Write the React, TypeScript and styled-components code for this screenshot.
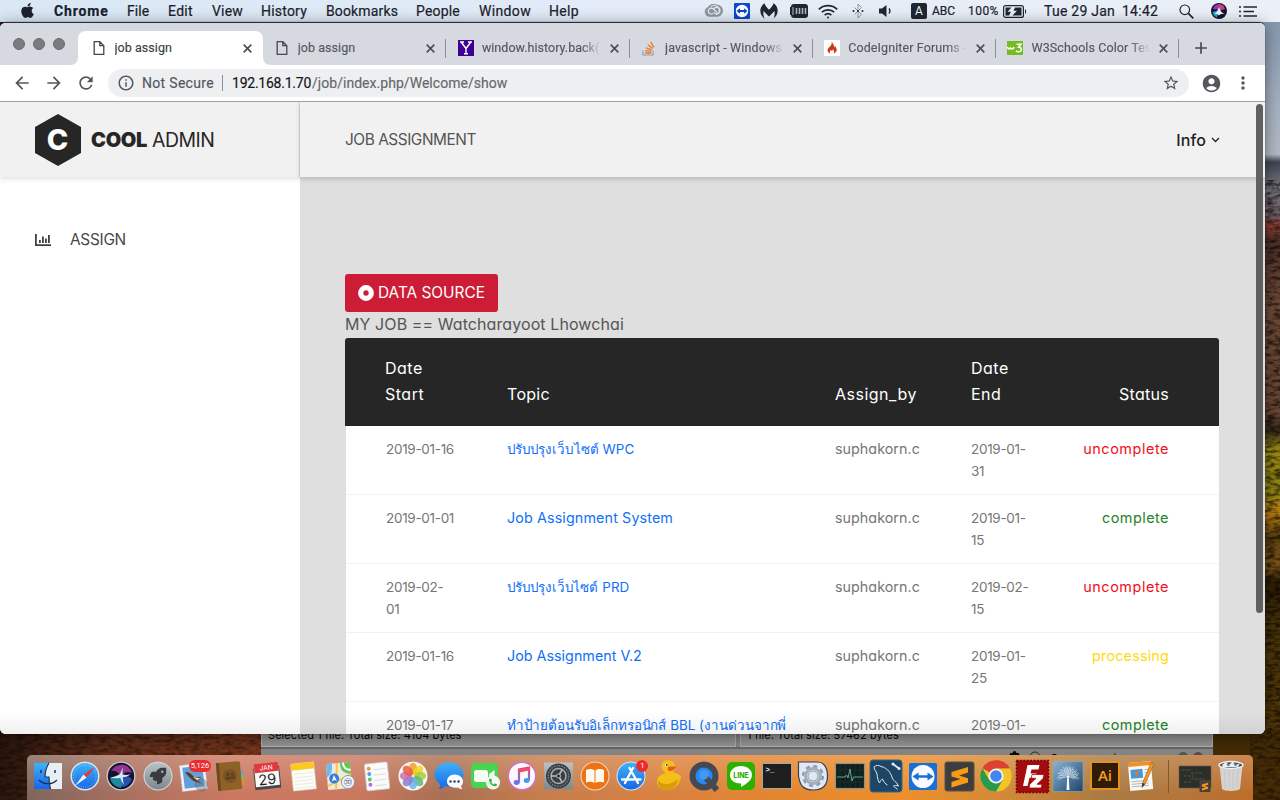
import React from "react";
import styled, { createGlobalStyle } from "styled-components";
import { FaApple, FaRocket, FaCog, FaPhoneAlt, FaUserFriends } from "react-icons/fa";
import {
  MdArrowBack, MdArrowForward, MdRefresh, MdStarBorder, MdAccountCircle, MdMoreVert,
  MdInfoOutline, MdAdd,
} from "react-icons/md";

const GlobalStyle = createGlobalStyle`
  * { box-sizing: border-box; }
  body { margin: 0; background: #2a1a10; }
  svg { display: block; flex: none; }
`;

const uiFont = `Roboto, "Liberation Sans", sans-serif`;
const pageFont = `Inter, "Noto Sans", sans-serif`;

/* ---------- desktop ---------- */

const Desktop = styled.div`
  position: relative;
  width: 1280px;
  height: 800px;
  overflow: hidden;
  font-family: ${uiFont};
`;

const Wallpaper = styled.svg`
  position: absolute;
  inset: 0;
`;

/* ---------- menu bar ---------- */

const MenuBar = styled.header`
  position: relative;
  display: flex;
  align-items: center;
  height: 22px;
  padding-left: 19px;
  background: linear-gradient(90deg, #d9e7f5, #e2ebf7 45%, #ebf0f7);
  color: #1b222c;
  font-size: 14px;
  line-height: 22px;
  -webkit-text-stroke: 0.2px #1b222c;
`;

const AppleMark = styled.span`
  width: 35px;
  margin-top: -1px;
`;

const MenuItem = styled.span<{ $w: number; $ls: number; $bold?: boolean }>`
  width: ${(p) => p.$w}px;
  letter-spacing: ${(p) => p.$ls}px;
  font-weight: ${(p) => (p.$bold ? 700 : 400)};
  white-space: nowrap;
`;

const StatusItem = styled.span<{ $w: number; $size?: number; $ls?: number }>`
  display: flex;
  align-items: center;
  width: ${(p) => p.$w}px;
  height: 22px;
  font-size: ${(p) => p.$size ?? 14}px;
  letter-spacing: ${(p) => p.$ls ?? 0}px;
  white-space: pre;
`;

/* ---------- browser window ---------- */

const BrowserWindow = styled.section`
  position: absolute;
  left: 0;
  top: 22px;
  display: flex;
  flex-direction: column;
  width: 1265px;
  height: 712px;
  border-top: 1px solid #252c38;
  border-radius: 6px;
  overflow: hidden;
  background: #fff;
`;

const WindowShadow = styled.div`
  position: absolute;
  left: 0;
  top: 22px;
  width: 1265px;
  height: 712px;
  border-radius: 6px;
  box-shadow: 0 3px 16px rgba(0, 0, 0, 0.45), 0 0 1px rgba(0, 0, 0, 0.8);
`;

const TabStrip = styled.div`
  display: flex;
  flex: none;
  height: 42px;
  background: #d6d9e0;
`;

const Lights = styled.div`
  display: flex;
  gap: 8px;
  width: 80px;
  padding: 15px 0 0 13px;
`;

const Light = styled.i`
  width: 12px;
  height: 12px;
  border: 1px solid #6b6b6f;
  border-radius: 50%;
  background: #7b7a7f;
`;

const Tab = styled.div<{ $active?: boolean }>`
  position: relative;
  display: flex;
  align-items: center;
  width: 183.2px;
  height: 34px;
  margin-top: 8px;
  color: ${(p) => (p.$active ? "#3c4043" : "#54585d")};
  font-size: 12.5px;
`;

const ActiveShape = styled.svg`
  position: absolute;
  left: -10px;
  top: 0;
`;

const TabIcon = styled.span<{ $shift?: boolean }>`
  position: relative;
  display: flex;
  justify-content: center;
  width: 16px;
  margin: 0 8px 0 ${(p) => (p.$shift ? 11.5 : 10.5)}px;
`;

const TabTitle = styled.span<{ $ls: number; $fade?: boolean }>`
  position: relative;
  width: 119px;
  overflow: hidden;
  line-height: 20px;
  letter-spacing: ${(p) => p.$ls}px;
  white-space: nowrap;
  -webkit-text-stroke: 0.15px currentColor;
  mask-image: ${(p) => (p.$fade ? "linear-gradient(90deg, #000 84%, transparent)" : "none")};
`;

const TabClose = styled.svg`
  position: relative;
  margin-left: 9px;
`;

const TabDivider = styled.i`
  width: 1px;
  height: 19px;
  margin-left: auto;
  background: #8c9096;
`;

const NewTab = styled.div`
  display: flex;
  align-items: center;
  height: 34px;
  margin: 8px 0 0 12px;
  color: #44484d;
`;

const Toolbar = styled.div`
  display: flex;
  flex: none;
  align-items: center;
  height: 37px;
  padding-left: 12px;
  border-bottom: 1px solid #a3a5a6;
  background: #fff;
  color: #54585d;
`;

const NavButton = styled.span`
  width: 32px;
`;

const ProfileButton = styled.span`
  width: 32px;
  margin-left: 12px;
`;

const Omnibox = styled.div`
  display: flex;
  align-items: center;
  width: 1081px;
  height: 28px;
  padding: 0 9px;
  border-radius: 14px;
  background: #eeeff1;
  font-size: 14px;
  -webkit-text-stroke: 0.15px currentColor;
`;

const Secure = styled.span`
  width: 80px;
  margin-left: 7px;
  letter-spacing: 0.31px;
  color: #54585d;
`;

const UrlDivider = styled.i`
  width: 1px;
  height: 16px;
  margin-right: 9px;
  background: #8c9096;
`;

const Host = styled.span`
  width: 80px;
  letter-spacing: -0.24px;
  color: #111315;
`;

const Path = styled.span`
  flex: 1;
  letter-spacing: 0.04px;
  color: #64686d;
`;

/* ---------- admin page ---------- */

const Page = styled.main`
  position: relative;
  display: flex;
  flex: 1;
  min-height: 0;
  background: #dfdfdf;
  color: #555;
  font-family: ${pageFont};
  font-size: 16px;
  font-feature-settings: "cv11";
`;

const Sidebar = styled.aside`
  width: 300px;
  background: #fff;
`;

const Brand = styled.div`
  display: flex;
  align-items: center;
  height: 75px;
  padding-left: 35px;
  border-right: 1px solid #d8d8d8;
  background: #f1f1f1;
  box-shadow: 0 2px 5px rgba(0, 0, 0, 0.12);
  color: #262626;
  font-size: 20px;
`;

const BrandStrong = styled.b`
  width: 61px;
  margin-left: 10px;
  font-weight: 900;
  letter-spacing: -0.32px;
`;

const BrandLight = styled.span`
  font-size: 19.4px;
  letter-spacing: -0.45px;
`;

const SideLink = styled.a`
  display: flex;
  align-items: center;
  gap: 19px;
  margin-top: 50px;
  padding-left: 35px;
  font-size: 15.4px;
  line-height: 25px;
  letter-spacing: -0.28px;
  color: #484848;
`;

const Content = styled.div`
  display: flex;
  flex: 1;
  flex-direction: column;
  min-width: 0;
`;

const TopBar = styled.div`
  display: flex;
  flex: none;
  align-items: center;
  justify-content: space-between;
  height: 75px;
  padding: 0 45px;
  background: #f1f1f1;
  box-shadow: 0 2px 5px rgba(0, 0, 0, 0.18);
`;

const PageTitle = styled.span`
  padding-bottom: 1px;
  font-size: 15.4px;
  letter-spacing: -0.45px;
`;

const InfoMenu = styled.span`
  display: flex;
  align-items: center;
  gap: 5px;
  font-weight: 500;
  letter-spacing: 0.1px;
  color: #222;
`;

const Body = styled.div`
  display: flex;
  flex: 1;
  flex-direction: column;
  align-items: flex-start;
  min-height: 0;
  padding: 97px 46px 0 45px;
  overflow: hidden;
`;

const SourceButton = styled.button`
  display: flex;
  flex: none;
  align-items: center;
  gap: 4px;
  width: 153px;
  height: 38px;
  padding: 0 0 1px 13px;
  border: 0;
  border-radius: 3px;
  background: #cc1c36;
  color: #fff;
  font: 400 15.4px ${pageFont};
  letter-spacing: 0;
`;

const Owner = styled.div`
  flex: none;
  height: 26px;
  line-height: 24px;
  letter-spacing: 0.09px;
`;

const columns = "122px 328px 136px 80px 118px";

const Table = styled.div`
  flex: none;
  width: 874px;
`;

const HeadRow = styled.div`
  display: grid;
  grid-template-columns: ${columns};
  align-items: end;
  height: 88px;
  padding: 0 0 19px 40px;
  border-radius: 3px 3px 0 0;
  background: #262626;
  color: #fff;
  line-height: 26px;
`;

const HeadCell = styled.span<{ $ls: number; $right?: boolean }>`
  letter-spacing: ${(p) => p.$ls}px;
  text-align: ${(p) => (p.$right ? "right" : "left")};
`;

const BodyRow = styled.div`
  display: grid;
  grid-template-columns: ${columns};
  height: 69px;
  margin-left: 1px;
  padding: 12px 0 0 39px;
  border-bottom: 1px solid #f2f2f2;
  background: #fff;
  color: #767676;
  font-size: 14px;
  line-height: 22px;
`;

const DateCell = styled.span<{ $indent?: boolean }>`
  padding-left: ${(p) => (p.$indent ? 1 : 0)}px;
  font-size: 13.5px;
  letter-spacing: -0.3px;
`;

const TopicCell = styled.a<{ $thai?: boolean; $ls: number }>`
  font-size: ${(p) => (p.$thai ? 13.4 : 14.3)}px;
  letter-spacing: ${(p) => p.$ls}px;
  white-space: nowrap;
  color: #1070f8;
`;

const ByCell = styled.span`
  font-size: 14.3px;
  letter-spacing: 0.04px;
`;

const statusTone = {
  uncomplete: { color: "#f01020", size: 14.4, ls: 0.57 },
  complete: { color: "#23821f", size: 14.4, ls: 0.48 },
  processing: { color: "#ffd90f", size: 14.4, ls: 0.17 },
};
type Status = keyof typeof statusTone;

const StatusCell = styled.span<{ $status: Status }>`
  color: ${(p) => statusTone[p.$status].color};
  font-size: ${(p) => statusTone[p.$status].size}px;
  letter-spacing: ${(p) => statusTone[p.$status].ls}px;
  text-align: right;
`;

const ScrollThumb = styled.i`
  position: absolute;
  right: 2px;
  top: 2px;
  width: 7px;
  height: 509px;
  border-radius: 4px;
  background: #606060;
`;

const BottomShade = styled.i`
  position: absolute;
  left: 0;
  right: 0;
  bottom: 0;
  height: 22px;
  background: linear-gradient(rgba(0, 0, 0, 0), rgba(0, 0, 0, 0.06));
`;

/* ---------- window behind the browser ---------- */

const BackWindow = styled.section`
  position: absolute;
  left: 261px;
  top: 722px;
  display: flex;
  flex-direction: column;
  width: 952px;
  height: 60px;
  background: #858585;
  color: #050505;
  font-family: ${pageFont};
  font-size: 11px;
`;

const Panes = styled.div`
  display: flex;
  gap: 4px;
  height: 27px;
  border-bottom: 2px solid #666;
`;

const Pane = styled.div<{ $w: number }>`
  width: ${(p) => p.$w}px;
  padding-left: 6px;
  border: 1px solid #b0b0b0;
  background: #949494;
  line-height: 24px;
  letter-spacing: 0.07px;
`;

const QueueBar = styled.div`
  display: flex;
  align-items: flex-start;
  gap: 9px;
  padding: 2px 0 0 748px;
  line-height: 14px;
`;

const Queue = styled.span`
  width: 118px;
`;

/* ---------- dock ---------- */

const DockBar = styled.nav`
  position: absolute;
  left: 27px;
  top: 755px;
  display: flex;
  width: 1226px;
  height: 46px;
  padding-left: 3px;
  border-radius: 5px 5px 0 0;
  background:
    linear-gradient(rgba(255, 235, 225, 0.22), rgba(255, 230, 210, 0) 85%),
    linear-gradient(90deg, #7e655c, #a8705f 8%, #cc7861 17%, #c9775f 27%, #a87052 34%, #c67d4e 42%, #d9813f 52%, #e4862f 62%, #ec8f2b 72%, #d08838 80%, #a97a43 88%, #b3763a 94%, #bd6d29);
`;

const Slot = styled.span<{ $w?: number }>`
  position: relative;
  display: flex;
  flex: none;
  justify-content: center;
  width: ${(p) => p.$w ?? 36.45}px;
  padding-top: 3px;
`;

const Badge = styled.span<{ $wide?: boolean }>`
  position: absolute;
  top: 5px;
  right: 1px;
  height: 12px;
  min-width: 12px;
  padding: 0 ${(p) => (p.$wide ? 2 : 0)}px;
  border-radius: 6px;
  background: #ec2b2f;
  color: #fff;
  font: 7.5px/12px ${uiFont};
  text-align: center;
`;

const DockRule = styled.i`
  width: 1px;
  height: 33px;
  margin-top: 2px;
  background: #7e5a30;
`;

const I = ({ children }: { children: React.ReactNode }) => (
  <svg width="36" height="36" viewBox="0 0 36 36">{children}</svg>
);

const Glyph = ({ x, y, size, color, icon: Icon }: { x: number; y: number; size: number; color: string; icon: any }) => (
  <Icon x={x} y={y} size={size} color={color} />
);

const dockIcons: { icon: React.ReactNode; badge?: string }[] = [
  { icon: (
    <I>
      <rect x="4" y="5" width="28" height="26" fill="#e9eef5" />
      <path d="M4 5h15c-3 5-4 9-4 14h4c0 4 .5 8 1.500 12H4z" fill="url(#blueDown)" />
      <path d="M11 12v3M25 12v3" stroke="#16304f" strokeWidth="1.500" />
      <path d="M9 22c5 5 13 5 18 0M19 5c-3 5-4 9-4 14h4c0 4 .5 8 1.500 12" fill="none" stroke="#16304f" strokeWidth="1.100" />
    </I>
  ) },
  { icon: (
    <I>
      <circle cx="18" cy="18" r="14.500" fill="#dfe5ea" /><circle cx="18" cy="18" r="13" fill="url(#blueDown)" />
      <circle cx="18" cy="18" r="11" fill="none" stroke="#bfe0fa" strokeWidth="1" strokeDasharray=".6 1.700" />
      <path d="M28 9L16.500 16.500l3 3z" fill="#f0352c" /><path d="M8 28l8.500-11.500 3 3z" fill="#f4f4f4" />
    </I>
  ) },
  { icon: (
    <I>
      <circle cx="18" cy="18" r="14.500" fill="#c9ccd4" /><circle cx="18" cy="18" r="13.200" fill="#15132f" />
      <path d="M8 13c3-5 8-7 13-6 4 1 7 4 8 8-4-2-8-1-11 3-3-4-6-6-10-5z" fill="#b03fa8" opacity=".8" />
      <path d="M7 20c4-1 8-1 11-2 2 4 2 8 0 12-5-1-10-4-11-10z" fill="#1fa7b8" opacity=".8" />
      <path d="M18 18c4-1 8 0 11 3-2 5-6 8-10 8 0-4 0-8-1-11z" fill="#2c62c9" opacity=".8" />
      <path d="M7 19.500c4-.5 7-1.500 10-3.500 1-2.500 2-5 3-6.500-.5 2.700-.6 5-.3 7 3 .8 5.500.6 8-.5-2.700 2.300-5 3-8 3.200.3 2.800.7 5 1.300 7.800-2-2.700-3-5-3.600-7.300-3.400.9-7 .8-10.400-.2z" fill="#e8fbff" opacity=".9" />
    </I>
  ) },
  { icon: (
    <I>
      <circle cx="18" cy="18" r="14.500" fill="#d5dadd" /><circle cx="18" cy="18" r="13.500" fill="url(#steel)" />
      <Glyph icon={FaRocket} x={9.5} y={9.5} size={17} color="#373b40" />
    </I>
  ) },
  { badge: "5,126", icon: (
    <I>
      <g transform="rotate(-7 18 19)">
        <rect x="5" y="6" width="25" height="26" fill="#f4f4f4" stroke="#cfcfcf" strokeDasharray="1.500 1.200" />
        <rect x="7.500" y="8.500" width="20" height="21" fill="#5f9fdc" />
        <path d="M10 13c4 0 6 3 8 6l7 1-3 3 3 4-8-4c-2-3-5-5-7-10z" fill="#5a3b1d" />
        <path d="M17 19l7 2-3 2z" fill="#e9dcc0" />
      </g>
      <circle cx="25.500" cy="27" r="6" fill="#65717e" opacity=".4" stroke="#3f4852" strokeWidth=".8" />
    </I>
  ) },
  { icon: (
    <I>
      <g transform="rotate(-5 18 18)">
        <path d="M28 13h3v5h-3z" fill="#50a9df" /><path d="M28 18h3v5h-3z" fill="#7ec443" /><path d="M28 23h3v5h-3z" fill="#e88e2d" />
        <rect x="5" y="4" width="24" height="28" rx="1.500" fill="#8d6229" />
        <rect x="5" y="4" width="3" height="28" fill="#6f4a1d" />
        <circle cx="18" cy="18" r="7" fill="#7c5423" />
        <Glyph icon={FaUserFriends} x={13} y={13} size={10} color="#5d3f1b" />
      </g>
    </I>
  ) },
  { icon: (
    <I>
      <g transform="rotate(-6 18 18)">
        <path d="M5 9h26v22H5z" fill="#45474a" />
        <rect x="6" y="8" width="24" height="20" fill="#fafafa" /><rect x="6" y="5" width="24" height="9" rx="1" fill="#e2383b" />
        <text x="18" y="11.800" fontSize="6.500" fill="#fff" textAnchor="middle" fontFamily="Inter">JAN</text>
        <text x="18" y="26.500" fontSize="14.500" fill="#222" textAnchor="middle" fontFamily="Inter">29</text>
      </g>
    </I>
  ) },
  { icon: (
    <I>
      <g transform="rotate(-6 18 18)">
        <rect x="7" y="5" width="23" height="27" fill="#fdfcf6" stroke="#d9d5c4" strokeWidth=".6" />
        <rect x="7" y="5" width="23" height="6.500" fill="#fbc91f" />
        <path d="M9 15.500h19M9 19h19M9 22.500h19M9 26h19M9 29.500h19" stroke="#e6e4dc" strokeWidth=".7" />
      </g>
    </I>
  ) },
  { icon: (
    <I>
      <g transform="rotate(-5 18 18)">
        <rect x="5" y="5" width="24" height="26" rx="1" fill="#efeadf" />
        <path d="M19 5c0 8 2 10 10 12V5z" fill="#66c355" /><path d="M22 5c0 5 2 7 7 8" stroke="#fff" strokeWidth="2" fill="none" />
        <path d="M5 5h6c0 9-2 11-6 13z" fill="#74b9ea" />
        <path d="M5 27L29 17M16 5l-3 26" stroke="#f7c93b" strokeWidth="2" />
        <circle cx="12" cy="20" r="5" fill="#2f7ee8" /><path d="M12 16.500l2.500 6-2.500-1-2.500 1z" fill="#fff" />
      </g>
      <circle cx="26" cy="24" r="6.500" fill="#f6f7f8" stroke="#8e97a1" />
      <circle cx="26" cy="24" r="3.800" fill="none" stroke="#7aa6d1" strokeWidth=".8" />
      <text x="26" y="25.700" fontSize="4.500" fill="#333" textAnchor="middle" fontFamily="Inter">3D</text>
    </I>
  ) },
  { icon: (
    <I>
      <g transform="rotate(-6 18 18)">
        <rect x="7.500" y="5" width="23" height="27" rx="1.500" fill="#fbfbfb" stroke="#c9c9c9" strokeWidth=".8" />
        {["#f5923e", "#3fa4f2", "#62c951", "#b96be0"].map((c, i) => (
          <g key={c}><circle cx="11.500" cy={10 + i * 5.4} r="2" fill={c} /><path d={`M16 ${11.5 + i * 5.4}h12`} stroke="#cfcfcf" strokeWidth=".7" /></g>
        ))}
      </g>
    </I>
  ) },
  { icon: (
    <I>
      <circle cx="18" cy="18" r="14.500" fill="#f5f5f3" />
      {["#f3a02c", "#f1d51f", "#a9cf3c", "#5fb97a", "#6cb5ea", "#8b7ed2", "#c672b4", "#ed5b45"].map((c, i) => (
        <ellipse key={c} cx="18" cy="10.800" rx="4.200" ry="6" fill={c} opacity=".85" transform={`rotate(${i * 45} 18 18)`} />
      ))}
    </I>
  ) },
  { icon: (
    <I>
      <path d="M18 4.500c8.500 0 14.500 5 14.500 12S26.500 28.500 18 28.500c-1.500 0-3 0-4-.5-1.500 2-4 3-6.500 3 1.500-1.500 2-3 1.500-5-3.500-2-5.500-5.500-5.500-9.500C3.500 9.500 9.500 4.500 18 4.500z" fill="url(#blueDown)" />
      <path d="M23.500 16.500c5 0 8.500 3 8.500 7 0 2-1 3.500-2 4.500 0 1 .5 2 1.500 3-2 0-3.500-.5-4.500-1.500-5 .8-11-1-11-6 0-4 3-7 7.500-7z" fill="#fbfcfd" />
      <g fill="#2a4d86"><circle cx="19.500" cy="23.500" r="1.300" /><circle cx="23.500" cy="23.500" r="1.300" /><circle cx="27.500" cy="23.500" r="1.300" /></g>
    </I>
  ) },
  { icon: (
    <I>
      <rect x="4" y="5" width="27" height="25" rx="4.500" fill="#48d350" />
      <rect x="7" y="12" width="14" height="12" rx="2.500" fill="#f5fbf5" /><path d="M22 16l5.500-4v11L22 20z" fill="#f5fbf5" />
      <circle cx="26" cy="24.500" r="7" fill="#f4f7f4" /><Glyph icon={FaPhoneAlt} x={22} y={20.5} size={8} color="#35b73e" />
    </I>
  ) },
  { icon: (
    <I>
      <circle cx="18" cy="18" r="14.500" fill="#d66fc3" /><circle cx="18" cy="18" r="13" fill="#fbfafc" />
      <path d="M15 24V11.500l10-2V22" fill="none" stroke="url(#tune)" strokeWidth="2.200" />
      <path d="M15 13l10-2" stroke="#ef4f73" strokeWidth="3" />
      <ellipse cx="12.700" cy="24.500" rx="3" ry="2.400" fill="#7a6fe8" /><ellipse cx="22.700" cy="22.500" rx="3" ry="2.400" fill="#3f9ef0" />
    </I>
  ) },
  { icon: (
    <I>
      <rect x="4" y="4.500" width="29" height="27" fill="url(#steel)" />
      <circle cx="18.500" cy="18" r="12.500" fill="#3c3f42" />
      <circle cx="18.500" cy="18" r="10.300" fill="none" stroke="#85898c" strokeWidth="1.200" strokeDasharray="1.500 1.200" />
      <circle cx="18.500" cy="18" r="7.500" fill="none" stroke="#a9adb0" strokeWidth="1.500" />
      <path d="M18.500 18H11M18.500 18l3.800-6.500M18.500 18l3.800 6.500" stroke="#b9bdc0" strokeWidth="1.500" />
      <circle cx="18.500" cy="18" r="2" fill="#25272a" stroke="#b9bdc0" />
    </I>
  ) },
  { icon: (
    <I>
      <circle cx="18" cy="18" r="14.500" fill="#f4d9bd" /><circle cx="18" cy="18" r="13.500" fill="#ee7314" />
      <path d="M9 12c3-1.500 6.500-1.500 8.500.5v12.500c-2.500-1.500-5.500-1.500-8.500-.5zM27 12c-3-1.500-6.500-1.500-8.500.5v12.500c2.500-1.500 5.500-1.500 8.500-.5z" fill="#fff8ef" />
    </I>
  ) },
  { badge: "1", icon: (
    <I>
      <circle cx="18" cy="18" r="14.500" fill="#d6e6f5" /><circle cx="18" cy="18" r="13.500" fill="url(#blueDown)" />
      <path d="M20 10l-8 15M16.500 10l8.500 15M9 21.500h12M24.500 21.500h3" stroke="#fff" strokeWidth="2.300" strokeLinecap="round" />
    </I>
  ) },
  { icon: (
    <I>
      <path d="M14 3c5-2 10 0 11 4 .8 3-.5 5-2 7 4 1 6 3 8 4-1 8-6 14-14 14-6 0-10-3-10-8 0-5 4-8 9-9-4-2-7-8-2-12z" fill="#f4c018" />
      <path d="M8 22c3 5 12 6 20-1-1 7-5 11-11 11-6 0-10-3-9-10z" fill="#d99c0a" />
      <path d="M18 9c3-1 5 0 8-1-1 3-3 5-6 5-2 0-3-2-2-4z" fill="#ea5a16" />
      <circle cx="16.500" cy="7" r="1.600" fill="#fff" /><circle cx="16.800" cy="7" r=".9" fill="#222" />
    </I>
  ) },
  { icon: (
    <I>
      <circle cx="18" cy="18" r="11.500" fill="#2b87f0" stroke="#444a53" strokeWidth="6" />
      <path d="M20 20l11 12" stroke="#444a53" strokeWidth="6" /><circle cx="18" cy="17" r="5" fill="#58a9fa" opacity=".5" />
    </I>
  ) },
  { icon: (
    <I>
      <rect x="4" y="4" width="28" height="28" rx="5" fill="#2bb101" />
      <path d="M18 8c6.500 0 11 4 11 9 0 6-8 10-11 12v-3.500c-6.500 0-11-3.500-11-8.500s4.500-9 11-9z" fill="#fff" />
      <text x="18" y="19.500" fontSize="7" fontWeight="800" fill="#2bb101" textAnchor="middle" fontFamily="Inter">LINE</text>
    </I>
  ) },
  { icon: (
    <I>
      <rect x="3.500" y="5.500" width="29" height="25" fill="#1d1e1f" stroke="#a8a59f" />
      <text x="6.500" y="13.500" fontSize="7.500" fontWeight="700" fill="#eee" fontFamily="Liberation Mono">&gt;_</text>
    </I>
  ) },
  { icon: (
    <I>
      <path d="M3.500 4h19c6 0 10 5 10 14s-4 14-14 14S5 28 3.500 18z" fill="#dfe8f4" stroke="#37404b" strokeWidth="1.200" />
      <circle cx="18" cy="18" r="9.800" fill="none" stroke="#8f9aa8" strokeWidth="2.500" strokeDasharray="4 3.700" />
      <circle cx="18" cy="18" r="7.500" fill="none" stroke="#a4adba" strokeWidth="3" /><circle cx="18" cy="18" r="5" fill="#dfe8f4" stroke="#7f8a98" strokeWidth=".8" />
    </I>
  ) },
  { icon: (
    <I>
      <rect x="3.500" y="5.500" width="29" height="25" fill="#10201f" stroke="#8d9290" strokeWidth="1.200" />
      <path d="M8 6v24M13 6v24M18 6v24M23 6v24M28 6v24M4 12h28M4 24h28" stroke="#1d3531" strokeWidth=".7" />
      <path d="M5 19h8l1.500-2 1.500 3 2-9 2 12 1.500-4H31" fill="none" stroke="#67b394" strokeWidth=".9" />
    </I>
  ) },
  { icon: (
    <I>
      <rect x="2" y="2" width="32" height="32" rx="3" fill="#1d4565" stroke="#35668c" />
      <path d="M6 9c2-2 5-2 7-.5C20 10 23.500 16 24.500 21c2.500 2 4.500 4 6 7-2-.6-4-.6-5 0 1 1.500 3 2 4 3.500M6 9c0 3 2.500 4 3 7 .5 4 1 7 2.500 9 .8-2 1.500-3.500 3-4 1 3 3 5 5 6" fill="none" stroke="#dfe9f1" strokeWidth="1" />
      <path d="M25 6l6 4.500" stroke="#e6eff6" strokeWidth="1.600" /><circle cx="25" cy="6" r="1.500" fill="#e6eff6" /><circle cx="31" cy="10.500" r="1.500" fill="#e6eff6" />
    </I>
  ) },
  { icon: (
    <I>
      <rect x="4" y="5" width="28" height="27" rx="1.500" fill="#1670d8" />
      <circle cx="18" cy="18.500" r="11.500" fill="#f7fbff" />
      <path d="M7.500 18.500l6-4v2.700h9v-2.700l6 4-6 4v-2.700h-9v2.700z" fill="#1670d8" />
    </I>
  ) },
  { icon: (
    <I>
      <rect x="4" y="4" width="29" height="29" rx="2" fill="#3d3d3d" stroke="#57534c" />
      <path d="M10.500 14L27 9v5.500l-9 2.900 9 2.800V24.500L10.500 29.500V24l9-2.900-9-2.700z" fill="#f99a15" />
    </I>
  ) },
  { icon: (
    <svg width="36" height="36" viewBox="2.500 2.500 31 31">
      <circle cx="18" cy="18" r="13.500" fill="#f2c428" />
      <path d="M18 18L6.300 11.250A13.500 13.500 0 0 1 29.700 11.250H18z" fill="#dd4133" />
      <path d="M18 4.500a13.500 13.500 0 0 1 11.700 6.750H18z" fill="#dd4133" />
      <path d="M6.300 11.250A13.500 13.500 0 0 0 18 31.500l5.800-10.200L18 24.500l-5.900-3.200z" fill="#2a9a4d" />
      <circle cx="18" cy="18" r="6.500" fill="#f2f4f4" /><circle cx="18" cy="18" r="5" fill="#4385f0" />
    </svg>
  ) },
  { icon: (
    <I>
      <rect x="2.500" y="2.500" width="32" height="32" fill="#a50b0c" stroke="#6b0505" strokeWidth="1.500" strokeDasharray="2 1.400" />
      <path d="M9 28l4.500-21h12l-1 4.500h-7l-1 4h6l-1 4.200h-6L13.500 28z" fill="#fff" />
      <path d="M18 16.500h12l-.8 3.800-6.200 6h5l-.8 3.700H15l.8-3.700 6.200-6h-4.800z" fill="#fff" stroke="#a50b0c" strokeWidth=".8" />
    </I>
  ) },
  { icon: (
    <I>
      <rect x="3" y="3.500" width="30" height="30" rx="1.500" fill="url(#tree)" stroke="#8cacc5" strokeWidth=".6" />
      <g stroke="#eaf3f9" strokeWidth=".45" fill="none">
        {[-95, -70, -48, -26, -8, 10, 28, 50, 72, 95].map((a) => (
          <path key={a} d="M18 19V7.500M18 14l-2-4.500M18 12l1.600-3M18 16l2-4" transform={`rotate(${a} 18 19)`} />
        ))}
      </g>
      <path d="M17.300 18h1.400l.8 14h-3z" fill="#f3f8fb" />
    </I>
  ) },
  { icon: (
    <I>
      <rect x="4" y="4" width="28" height="27" fill="#2f1b08" stroke="#e4901d" strokeWidth="2" />
      <text x="18" y="22.500" fontSize="15" fontWeight="600" fill="#f79c21" textAnchor="middle" fontFamily="Open Sans">Ai</text>
    </I>
  ) },
  { icon: (
    <I>
      <g transform="rotate(-5 18 18)">
        <rect x="6" y="4" width="23" height="28" fill="#f7f7f5" /><rect x="6" y="4" width="23" height="4" fill="#f19122" />
        <rect x="8" y="11" width="12" height="9" fill="#3d9be5" /><path d="M11 13l6 0-3 5z" fill="#f0731c" />
        <path d="M8 23h17M8 25.500h17M8 28h17M22 12h4M22 15h4" stroke="#b1b1b1" strokeWidth=".9" />
      </g>
      <path d="M28 4.500l3 1.500-9 20-3 3.500.5-4.500z" fill="#f3971d" stroke="#8b5210" strokeWidth=".5" /><path d="M19.500 25l2.500 1-3 3.500z" fill="#333" />
    </I>
  ) },
];

const WindowThumb = () => (
  <I>
    <rect x="2" y="8" width="32" height="22" fill="#2b2f2a" stroke="#5e5a4c" strokeWidth=".6" />
    <path d="M5 12h9M14 15h12M7 18h10M14 21h14M7 24h8" stroke="#5a6f42" strokeWidth=".7" strokeDasharray="3 1" />
    <rect x="22.500" y="22" width="11" height="12" rx="1" fill="#4a4138" />
    <path d="M25 26.500l6-1.800v2l-3.500 1.100 3.500 1.100v1.800L25 32.500v-2l3.500-1.100-3.500-1z" fill="#f99a15" />
  </I>
);

const Trash = () => (
  <I>
    <path d="M6.500 7h23l-2.500 24c-3 2.500-15 2.500-18 0z" fill="#d8dbdc" opacity=".92" />
    <path d="M11 11l1.500 19M16 11l.8 20M20.500 11l-.8 20M25 11l-1.500 19" stroke="#c6cacc" strokeWidth="1.200" />
    <ellipse cx="18" cy="7" rx="12" ry="3.500" fill="#4b5152" stroke="#f3f4f4" strokeWidth="1.300" />
    <path d="M9 7l4-3 3 3 4-4 3 4 4-2-2 4-15 0z" fill="#eceeee" /><path d="M14 6l2 2M21 5l2 3" stroke="#3d83b5" strokeWidth="1.500" />
  </I>
);

/* ---------- shared gradients and background ---------- */

const Background = () => (
  <Wallpaper width="1280" height="800" viewBox="0 0 1280 800">
    <defs>
      <linearGradient id="blueDown" x1="0" y1="0" x2="0" y2="1"><stop offset="0" stopColor="#3fb3f8" /><stop offset="1" stopColor="#1766e6" /></linearGradient>
      <linearGradient id="steel" x1="0" y1="0" x2="0" y2="1"><stop offset="0" stopColor="#b9c2c6" /><stop offset="1" stopColor="#7d878d" /></linearGradient>
      <linearGradient id="tree" x1="0" y1="0" x2="1" y2="1"><stop offset="0" stopColor="#88b4d8" /><stop offset="1" stopColor="#1d4568" /></linearGradient>
      <linearGradient id="tune" x1="0" y1="0" x2="0" y2="1"><stop offset="0" stopColor="#f2456c" /><stop offset="1" stopColor="#6d7cf0" /></linearGradient>
      <linearGradient id="side" x1="0" y1="0" x2="0" y2="1">
        <stop offset="0" stopColor="#8697ae" /><stop offset=".1" stopColor="#a3afbf" /><stop offset=".17" stopColor="#b3bac4" />
        <stop offset=".18" stopColor="#3d434e" /><stop offset=".21" stopColor="#777581" /><stop offset=".25" stopColor="#6e5d62" />
        <stop offset=".26" stopColor="#9b4238" /><stop offset=".28" stopColor="#4c2e28" /><stop offset=".36" stopColor="#6d4935" />
        <stop offset=".5" stopColor="#6a4635" /><stop offset=".525" stopColor="#3a2a18" /><stop offset=".55" stopColor="#9a8a13" />
        <stop offset=".6" stopColor="#8e8415" /><stop offset=".63" stopColor="#b87f11" /><stop offset=".66" stopColor="#5d4210" />
        <stop offset=".7" stopColor="#7a5215" /><stop offset=".72" stopColor="#2f1d06" /><stop offset=".78" stopColor="#4a3409" />
        <stop offset="1" stopColor="#5a3a08" />
      </linearGradient>
      <linearGradient id="floor" x1="0" y1="0" x2="1" y2="0"><stop offset="0" stopColor="#2a160e" /><stop offset=".4" stopColor="#5f2d1a" /><stop offset="1" stopColor="#78371d" /></linearGradient>
      <filter id="grain" x="0" y="0" width="1" height="1"><feTurbulence type="fractalNoise" baseFrequency=".12 .3" numOctaves="3" seed="4" /><feColorMatrix values="0 0 0 0 0  0 0 0 0 0  0 0 0 0 0  2.800 0 0 0 -1.100" /></filter>
    </defs>
    <rect x="1205" y="22" width="75" height="778" fill="url(#side)" />
    <rect x="0" y="720" width="262" height="80" fill="url(#floor)" />
    <rect x="1250" y="180" width="30" height="620" filter="url(#grain)" opacity=".6" />
    <rect x="0" y="730" width="262" height="70" filter="url(#grain)" opacity=".4" />
    <rect x="1213" y="730" width="67" height="70" fill="#2a1904" opacity=".4" />
  </Wallpaper>
);

/* ---------- menu bar pieces ---------- */

const menuItems: [string, number, number][] = [
  ["File", 41, 0.05], ["Edit", 44, 0.32], ["View", 49, 0.18], ["History", 65, 0.21], ["Bookmarks", 90, 0.14],
  ["People", 63, 0.19], ["Window", 70, 0.34], ["Help", 155, 0.33],
];

const ink = "#20262f";

const TopMenu = () => (
  <MenuBar>
    <AppleMark><FaApple size={17} /></AppleMark>
    <MenuItem $w={73} $ls={0.88} $bold>Chrome</MenuItem>
    {menuItems.map(([label, w, ls]) => <MenuItem key={label} $w={w} $ls={ls}>{label}</MenuItem>)}
    <StatusItem $w={30}>
      <svg width="20" height="14" viewBox="0 0 20 14">
        <path d="M6.500 12.700A5 5 0 0 1 3.500 3.300 7.300 7.300 0 0 1 13.500.8a6 6 0 0 1 .5 11.900z" fill="#8f979f" />
        <path d="M9.500 9.200a3 3 0 1 1 .2-4L13 8.700M10 8.500a3.300 3.300 0 1 0-.3-3.500" fill="none" stroke="#e5edf6" strokeWidth="1.200" />
        <path d="M7 2.800a4.800 4.800 0 1 1 4.500 8" fill="none" stroke="#e5edf6" strokeWidth=".9" />
      </svg>
    </StatusItem>
    <StatusItem $w={26}>
      <svg width="16" height="16" viewBox="0 0 16 16">
        <rect width="16" height="16" rx="1" fill="#0d46cf" /><circle cx="8" cy="8" r="6.200" fill="#fff" />
        <path d="M2.500 8l3.500-2.700v1.700h4V5.300L13.500 8 10 10.700V9H6v1.700z" fill="#0d46cf" />
      </svg>
    </StatusItem>
    <StatusItem $w={30}>
      <svg width="18" height="16" viewBox="0 0 18 16"><path d="M4.500 15.500C.5 13-.5 8 1 4.500 1.800 2.500 3 1.300 4.500.3c.8 2.700 2.500 4.700 4.500 6.400C11 5 12.700 3 13.500.3c1.500 1 2.700 2.200 3.500 4.200 1.500 3.500.5 8.500-3.500 11 1.200-2.500 1.500-5 .8-7.500-1.500 1.800-3.500 4-5.300 5.500C7.200 12 5.200 9.800 3.700 8c-.7 2.500-.4 5 .8 7.500z" fill={ink} /></svg>
    </StatusItem>
    <StatusItem $w={28}>
      <svg width="18" height="14" viewBox="0 0 18 14"><rect x="1" y="0" width="17" height="14" rx="3" fill={ink} /><rect x="0" y="3" width="2" height="8" fill={ink} /><path d="M6.500 4v6M9.500 4v6M12.500 4v6M15.500 4v6" stroke="#aeb5bd" strokeWidth="1.600" /><path d="M3 3v8" stroke="#e3ebf5" strokeWidth=".8" /></svg>
    </StatusItem>
    <StatusItem $w={34}>
      <svg width="20" height="15" viewBox="0 0 20 15" fill="none" stroke={ink} strokeWidth="1.700"><path d="M.8 5.300a13.500 13.500 0 0 1 18.400 0M3.800 8.200a9.300 9.300 0 0 1 12.400 0M6.700 11a5 5 0 0 1 6.600 0" /><circle cx="10" cy="13.500" r="1" fill={ink} stroke="none" /></svg>
    </StatusItem>
    <StatusItem $w={27}>
      <svg width="12" height="16" viewBox="0 0 12 16"><path d="M2.500 4.500l7 7L6 15V1l3.500 3.500-7 7" fill="none" stroke="#8e959d" /><circle cx="1.500" cy="8" r="1" fill={ink} /><circle cx="6" cy="8" r="1" fill={ink} /><circle cx="10.500" cy="8" r="1" fill={ink} /></svg>
    </StatusItem>
    <StatusItem $w={32}>
      <svg width="14" height="12" viewBox="0 0 14 12"><path d="M0 3.500h3L7.500 0v12L3 8.500H0z" fill={ink} /><path d="M10 3.500a4 4 0 0 1 0 5" fill="none" stroke={ink} strokeWidth="1.300" /></svg>
    </StatusItem>
    <StatusItem $w={21}>
      <svg width="16" height="16" viewBox="0 0 16 16"><rect width="16" height="16" rx="2" fill={ink} /><text x="8" y="12.300" fontSize="12" textAnchor="middle" fill="#eef2f7" stroke="none" fontFamily="Roboto">A</text></svg>
    </StatusItem>
    <StatusItem $w={36} $size={12}>ABC</StatusItem>
    <StatusItem $w={35} $size={12} $ls={0.45}>100%</StatusItem>
    <StatusItem $w={41}>
      <svg width="24" height="13" viewBox="0 0 24 13"><rect x=".6" y=".6" width="19.800" height="11.800" rx="2" fill="none" stroke={ink} strokeWidth="1.200" /><path d="M2.500 2.500h6l-4 4.300h3.500l-2 3.700H2.500zM12 2.500h6.500v8H9.500l4.500-4.800h-3.500z" fill={ink} /><path d="M22 4c1.500 1 1.500 4 0 5z" fill={ink} /></svg>
    </StatusItem>
    <StatusItem $w={78} $ls={0.24}>Tue 29 Jan</StatusItem>
    <StatusItem $w={57} $ls={0.25}>14:42</StatusItem>
    <StatusItem $w={32}>
      <svg width="15" height="15" viewBox="0 0 15 15" fill="none" stroke={ink}><circle cx="5.800" cy="5.800" r="4.800" strokeWidth="1.200" /><path d="M9.300 9.300l5 5" strokeWidth="1.700" /></svg>
    </StatusItem>
    <StatusItem $w={28}>
      <svg width="16" height="16" viewBox="0 0 16 16"><circle cx="8" cy="8" r="8" fill="#15132f" /><path d="M2 6a6.500 6.500 0 0 1 6-5v6z" fill="#8d3bb5" /><path d="M8 1a6.500 6.500 0 0 1 6 5L8 8z" fill="#cc3f7d" /><path d="M1.500 9L8 7l-2 7.500A7 7 0 0 1 1.500 9z" fill="#16a6c4" /><path d="M2 11.500C5 10.500 7 8 8 4c1 4 3 6 6 7.500-3-.7-4.500-.5-6 1-1.500-1.500-3-1.700-6-1z" fill="#f3f6ff" /></svg>
    </StatusItem>
    <StatusItem $w={18}>
      <svg width="18" height="11" viewBox="0 0 18 11" stroke={ink} strokeWidth="1.700"><path d="M4.500 1H18M4.500 5.500H15M4.500 10H18M0 1h2M0 5.500h2M0 10h2" /></svg>
    </StatusItem>
  </MenuBar>
);

/* ---------- tabs ---------- */

const PageGlyph = () => (
  <svg width="12" height="14" viewBox="0 0 12 14" fill="none" stroke="#44484c" strokeWidth="1.300"><path d="M1.200.7h5.600l4 4v8.600H1.200zM6.800.7v4h4" /></svg>
);
const Yahoo = () => (
  <svg width="16" height="16" viewBox="0 0 16 16"><rect width="16" height="16" fill="#3d0294" /><path d="M3.500 2.500l4.500 6 4.500-6M8 8.500V14M2 2h4M10 2h4M6 13.800h4" stroke="#fff" strokeWidth="1.400" fill="none" /></svg>
);
const Stack = () => (
  <svg width="14" height="15" viewBox="0 0 14 15" fill="none"><path d="M1 9.500V14h10V9.500" stroke="#9a9da1" strokeWidth="1.200" /><path d="M3 12h6.200M3.200 9.600l6.100.8M4 6.800l5.800 2M5.800 3.700l4.900 3.800M8.700 1.200l3.200 5.200" stroke="#ec762b" strokeWidth="1.300" /></svg>
);
const Flame = () => (
  <svg width="16" height="16" viewBox="0 0 16 16"><rect width="16" height="16" fill="#fff" /><path d="M7.500 2c.8 2.500-.8 3.800-2.300 5.300C3.500 9 3 10.800 4.300 12.300c.6.700 1.300 1 2 1.200C5.500 12 6 10.800 7 9.800c.2 1.100.8 1.300 1.300 1 .7-.5.3-1.300.2-1.800 1.700 1.200 2.200 3 1 4.500 2.500-.7 3.500-2.500 3.200-4.200-.3-1.300-1.300-2-1.500-3.500-.7.500-.9 1.300-.7 2C9.800 7 10.300 4 7.500 2z" fill="#c63a17" /></svg>
);
const W3 = () => (
  <svg width="16" height="14" viewBox="0 0 16 14"><rect width="16" height="14" fill="#76bc21" /><path d="M.5 6c.5 2.500 2.500 2.500 3 .3.500 2.200 3 2.200 3.500-.3M9.500 3.200h4.500L11.500 6c4 0 3.500 5-.3 4.800-1 0-1.700-.4-2.200-1" fill="none" stroke="#fff" strokeWidth="1.500" /></svg>
);

const tabs: { icon: React.ReactNode; title: string; ls: number; fade?: boolean; divider?: boolean; active?: boolean }[] = [
  { icon: <PageGlyph />, title: "job assign", ls: 0.06, active: true },
  { icon: <PageGlyph />, title: "job assign", ls: 0.06, divider: true },
  { icon: <Yahoo />, title: "window.history.back(", ls: 0.03, fade: true, divider: true },
  { icon: <Stack />, title: "javascript - Windows", ls: 0.12, fade: true, divider: true },
  { icon: <Flame />, title: "CodeIgniter Forums -", ls: 0.1, fade: true, divider: true },
  { icon: <W3 />, title: "W3Schools Color Tes", ls: 0.1, fade: true, divider: true },
];

/* ---------- table data ---------- */

type Job = { start: string; topic: string; thai?: boolean; ls: number; end: string; status: Status };

const jobs: Job[] = [
  { start: "2019-01-16", topic: "ปรับปรุงเว็บไซต์ WPC", thai: true, ls: 0.06, end: "2019-01-31", status: "uncomplete" },
  { start: "2019-01-01", topic: "Job Assignment System", ls: 0.13, end: "2019-01-15", status: "complete" },
  { start: "2019-02-01", topic: "ปรับปรุงเว็บไซต์ PRD", thai: true, ls: 0.04, end: "2019-02-15", status: "uncomplete" },
  { start: "2019-01-16", topic: "Job Assignment V.2", ls: 0.02, end: "2019-01-25", status: "processing" },
  { start: "2019-01-17", topic: "ทำป้ายต้อนรับอิเล็กทรอนิกส์ BBL (งานด่วนจากพี่", thai: true, ls: -0.03, end: "2019-01-", status: "complete" },
];

const breakDate = (d: string) => (<>{d.slice(0, 8)}<br />{d.slice(8)}</>);

export default function App() {
  return (
    <Desktop>
      <GlobalStyle />
      <Background />
      <TopMenu />
      <BackWindow>
        <Panes>
          <Pane $w={475}>Selected 1 file. Total size: 4104 bytes</Pane>
          <Pane $w={473}>1 file. Total size: 57462 bytes</Pane>
        </Panes>
        <QueueBar>
          <FaCog size={11} />
          <svg width="12" height="12" viewBox="0 0 12 12"><circle cx="6" cy="6" r="5" fill="none" stroke="#2a2a2a" /><circle cx="6" cy="6" r="2" fill="#2a2a2a" /></svg>
          <Queue>Queue: empty</Queue>
          <svg width="30" height="12" viewBox="0 0 30 12"><circle cx="6" cy="6" r="5" fill="#4c5a48" /><circle cx="21" cy="6" r="5" fill="#5f4c48" /></svg>
        </QueueBar>
      </BackWindow>
      <WindowShadow />
      <BrowserWindow>
        <TabStrip>
          <Lights><Light /><Light /><Light /></Lights>
          {tabs.map((t, i) => (
            <Tab key={i} $active={t.active}>
              {t.active && (
                <ActiveShape width="201" height="34" viewBox="0 0 201 34">
                  <path d="M0 34c5 0 8-3 8-8V8c0-5 3-8 8-8h169c5 0 8 3 8 8v18c0 5 3 8 8 8z" fill="#fff" />
                </ActiveShape>
              )}
              <TabIcon $shift={i > 1}>{t.icon}</TabIcon>
              <TabTitle $ls={t.ls} $fade={t.fade}>{t.title}</TabTitle>
              <TabClose width="9" height="9" viewBox="0 0 9 9">
                <path d="M.7.700l7.600 7.600M8.300.700L.7 8.300" stroke="#4d5156" strokeWidth="1.700" />
              </TabClose>
              {t.divider && <TabDivider />}
            </Tab>
          ))}
          <NewTab><MdAdd size={20} /></NewTab>
        </TabStrip>
        <Toolbar>
          <NavButton><MdArrowBack size={20} /></NavButton>
          <NavButton><MdArrowForward size={20} /></NavButton>
          <NavButton><MdRefresh size={20} /></NavButton>
          <Omnibox>
            <MdInfoOutline size={18} />
            <Secure>Not Secure</Secure>
            <UrlDivider />
            <Host>192.168.1.70</Host>
            <Path>/job/index.php/Welcome/show</Path>
            <MdStarBorder size={18} />
          </Omnibox>
          <ProfileButton><MdAccountCircle size={21} /></ProfileButton>
          <MdMoreVert size={20} />
        </Toolbar>
        <Page>
          <Sidebar>
            <Brand>
              <svg width="46" height="52" viewBox="0 0 46 52">
                <path d="M23 0l23 13v26L23 52 0 39V13z" fill="#262626" />
                <text x="22.500" y="36" fontSize="29" fontWeight="800" textAnchor="middle" fill="#fff">C</text>
              </svg>
              <BrandStrong>COOL</BrandStrong>
              <BrandLight>ADMIN</BrandLight>
            </Brand>
            <SideLink>
              <svg width="16" height="12" viewBox="0 0 16 12" fill="none" stroke="#404040" strokeWidth="1.800"><path d="M.9 0v11.100H16M4.900 9V6M7.900 9V2.500M10.900 9V4.500M13.900 9V1" /></svg>
              ASSIGN
            </SideLink>
          </Sidebar>
          <Content>
            <TopBar>
              <PageTitle>JOB ASSIGNMENT</PageTitle>
              <InfoMenu>
                Info
                <svg width="9" height="6" viewBox="0 0 9 6"><path d="M1 1l3.500 3.500L8 1" fill="none" stroke="#222" strokeWidth="1.300" /></svg>
              </InfoMenu>
            </TopBar>
            <Body>
              <SourceButton>
                <svg width="16" height="16" viewBox="0 0 16 16"><circle cx="8" cy="8" r="5.300" fill="none" stroke="#fff" strokeWidth="5.200" /></svg>
                DATA SOURCE
              </SourceButton>
              <Owner>MY JOB == Watcharayoot Lhowchai</Owner>
              <Table>
                <HeadRow>
                  <HeadCell $ls={0.5}>Date<br />Start</HeadCell>
                  <HeadCell $ls={0.3}>Topic</HeadCell>
                  <HeadCell $ls={0.5}>Assign_by</HeadCell>
                  <HeadCell $ls={0.5}>Date<br />End</HeadCell>
                  <HeadCell $ls={0.29} $right>Status</HeadCell>
                </HeadRow>
                {jobs.map((j, i) => (
                  <BodyRow key={i}>
                    <DateCell $indent>{j.start === "2019-02-01" ? breakDate(j.start) : j.start}</DateCell>
                    <TopicCell $thai={j.thai} $ls={j.ls}>{j.topic}</TopicCell>
                    <ByCell>suphakorn.c</ByCell>
                    <DateCell>{breakDate(j.end)}</DateCell>
                    <StatusCell $status={j.status}>{j.status}</StatusCell>
                  </BodyRow>
                ))}
              </Table>
            </Body>
          </Content>
          <ScrollThumb />
          <BottomShade />
        </Page>
      </BrowserWindow>
      <DockBar>
        {dockIcons.map((d, i) => (
          <Slot key={i}>
            {d.icon}
            {d.badge && <Badge $wide={d.badge.length > 1}>{d.badge}</Badge>}
          </Slot>
        ))}
        <Slot $w={17}><DockRule /></Slot>
        <Slot><WindowThumb /></Slot>
        <Slot><Trash /></Slot>
      </DockBar>
    </Desktop>
  );
}
